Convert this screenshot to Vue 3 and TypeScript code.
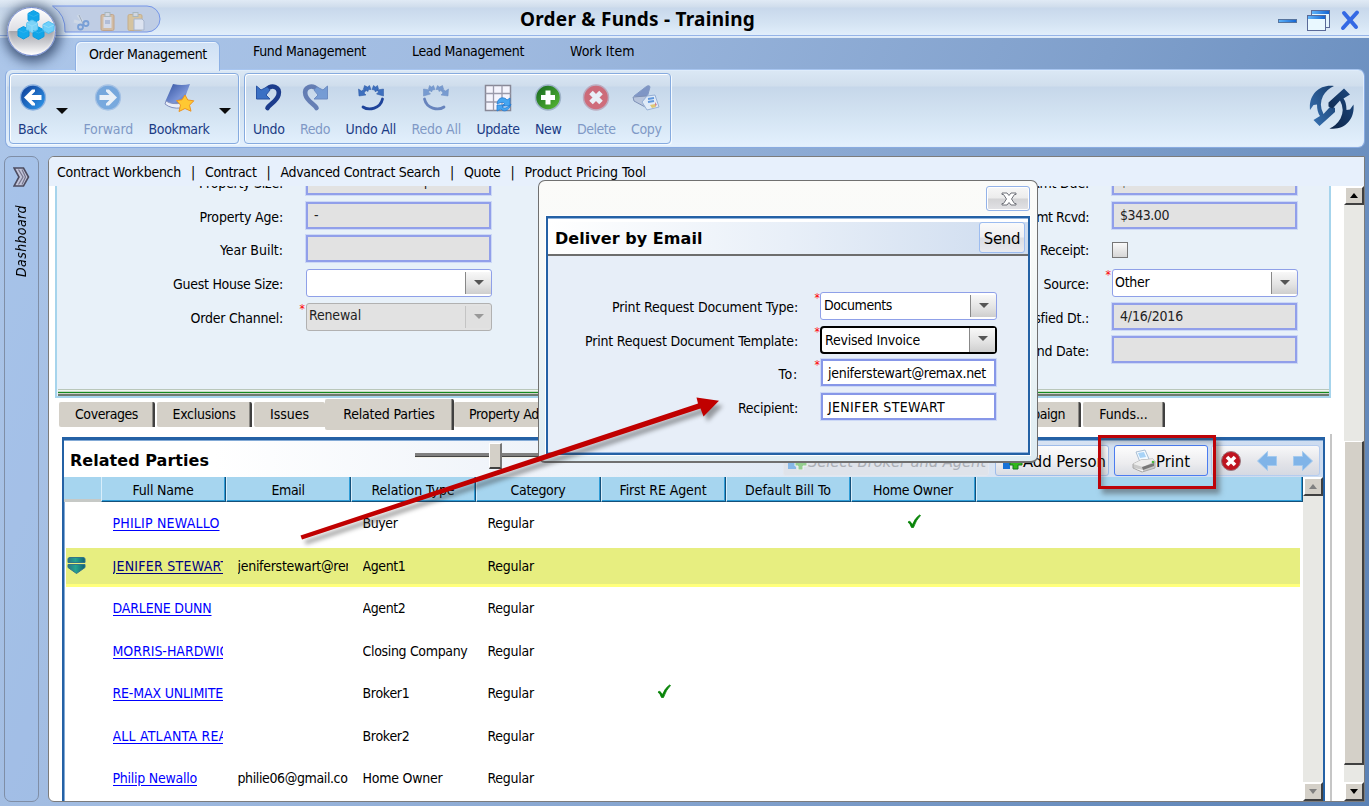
<script setup lang="ts">
import type { Directive } from 'vue'

// Tunes letter spacing so that a label takes up the given length in pixels.
const vFit: Directive<HTMLElement, number | undefined> = {
  mounted(el, { value }) {
    if (!value) return
    const range = document.createRange()
    range.selectNodeContents(el)
    const { width, height } = range.getBoundingClientRect()
    const natural = Math.max(width, height)
    const count = (el.textContent ?? '').trim().length
    if (count) el.style.letterSpacing = `${(value - natural) / count}px`
  },
}

interface Tool { id: string; label: string; w: number; off?: boolean }
const navTools: Tool[] = [
  { id: 'back', label: 'Back', w: 29 },
  { id: 'forward', label: 'Forward', w: 49.5, off: true },
  { id: 'bookmark', label: 'Bookmark', w: 61 },
]
const editTools: Tool[] = [
  { id: 'undo', label: 'Undo', w: 31.5 },
  { id: 'redo', label: 'Redo', w: 30, off: true },
  { id: 'undoall', label: 'Undo All', w: 50.5 },
  { id: 'redoall', label: 'Redo All', w: 49.5, off: true },
  { id: 'update', label: 'Update', w: 43 },
  { id: 'new', label: 'New', w: 26.5 },
  { id: 'delete', label: 'Delete', w: 38.5, off: true },
  { id: 'copy', label: 'Copy', w: 30.5, off: true },
]
const menus = [
  { label: 'Fund Management', w: 113 },
  { label: 'Lead Management', w: 112 },
  { label: 'Work Item', w: 64.5 },
]
const links = [
  { label: 'Contract Workbench', w: 124 },
  { label: 'Contract', w: 51.5 },
  { label: 'Advanced Contract Search', w: 159.5 },
  { label: 'Quote', w: 36.5 },
  { label: 'Product Pricing Tool', w: 121.5 },
]

interface Field { label: string; w: number; kind: 'text' | 'select' | 'check'; value?: string; vw?: number; req?: boolean; off?: boolean }
const leftFields: Field[] = [
  { label: 'Property Size:', w: 84, kind: 'text', value: 'Less than 5000 sq ft', vw: 126, off: true },
  { label: 'Property Age:', w: 83.5, kind: 'text', value: '-', off: true },
  { label: 'Year Built:', w: 63, kind: 'text', off: true },
  { label: 'Guest House Size:', w: 110, kind: 'select' },
  { label: 'Order Channel:', w: 92.5, kind: 'select', value: 'Renewal', vw: 52, req: true, off: true },
]
const rightFields: Field[] = [
  { label: 'Amt Due:', w: 58, kind: 'text', value: '$588.00', vw: 49, off: true },
  { label: 'Amt Rcvd:', w: 61, kind: 'text', value: '$343.00', vw: 49, off: true },
  { label: 'Receipt:', w: 49, kind: 'check' },
  { label: 'Source:', w: 45.5, kind: 'select', value: 'Other', vw: 34.5, req: true },
  { label: 'Satisfied Dt.:', w: 78, kind: 'text', value: '4/16/2016', vw: 63, off: true },
  { label: 'End Date:', w: 60, kind: 'text', off: true },
]
const mailFields = [
  { label: 'Print Request Document Type:', w: 186, kind: 'select', value: 'Documents', vw: 68, req: true },
  { label: 'Print Request Document Template:', w: 213, kind: 'select', value: 'Revised Invoice', vw: 95, req: true, focus: true },
  { label: 'To:', w: 19.5, kind: 'text', value: 'jeniferstewart@remax.net', vw: 158, req: true },
  { label: 'Recipient:', w: 60, kind: 'text', value: 'JENIFER STEWART', vw: 117 },
]

const columns = [
  { label: 'Full Name', w: 61 }, { label: 'Email', w: 33 }, { label: 'Relation Type', w: 83 },
  { label: 'Category', w: 55 }, { label: 'First RE Agent', w: 87 }, { label: 'Default Bill To', w: 86 },
  { label: 'Home Owner', w: 80 },
]
const people = [
  { name: 'PHILIP NEWALLO', nw: 107, relation: 'Buyer', rw: 35, home: true },
  { name: 'JENIFER STEWART', nw: 116, email: 'jeniferstewart@remax.net', ew: 158, relation: 'Agent1', rw: 43, selected: true },
  { name: 'DARLENE DUNN', nw: 99, relation: 'Agent2', rw: 43 },
  { name: 'MORRIS-HARDWICK', nw: 124, relation: 'Closing Company', rw: 105 },
  { name: 'RE-MAX UNLIMITED', nw: 120, relation: 'Broker1', rw: 47, agent: true },
  { name: 'ALL ATLANTA REALTY', nw: 136, relation: 'Broker2', rw: 47 },
  { name: 'Philip Newallo', nw: 84.5, email: 'philie06@gmail.co', ew: 110, relation: 'Home Owner', rw: 80 },
]
</script>

<template>
  <div class="app">
    <header class="title">
      <h1><span v-fit="235">Order &amp; Funds - Training</span></h1>
      <svg class="winbtns" width="90" height="26" viewBox="0 0 90 26">
        <defs><linearGradient id="wb"><stop offset="0" stop-color="#5fb4fa" /><stop offset="1" stop-color="#1464d2" /></linearGradient></defs>
        <rect x="3.500" y="11.500" width="18" height="3" fill="url(#wb)" stroke="#56749e" />
        <rect x="36.500" y="2.500" width="18" height="17" fill="#e4f5ff" stroke="#5a6a98" /><rect x="37" y="3" width="17" height="3" fill="url(#wb)" />
        <rect x="32.500" y="7.500" width="18" height="15" fill="#e9f8ff" stroke="#5a6a98" /><rect x="33" y="8" width="17" height="3" fill="url(#wb)" />
        <path d="M69 5 L81 19 M82 4.500 L68 20" stroke="#3469e4" stroke-width="4" stroke-linecap="round" />
      </svg>
    </header>

    <nav class="menu">
      <div class="menu-on"><span v-fit="118">Order Management</span></div>
      <span v-for="m in menus" :key="m.label" v-fit="m.w" class="menu-item">{{ m.label }}</span>
    </nav>

    <div class="quick">
      <svg width="140" height="30" viewBox="0 0 140 30">
        <path d="M.5 1 H95 A13 13 0 0 1 95 27 H13 Q14 10 .5 1Z" fill="#bfcde4" stroke="#7696e8" />
        <g opacity=".62" fill="none" transform="translate(0 1)">
          <path d="M26 9 L34 21 M22 15 L33 18" stroke="#d8e0e8" stroke-width="3" /><path d="M27 9 l5 11" stroke="#8a98a8" />
          <circle cx="28.500" cy="21" r="2.500" stroke="#4d83cf" stroke-width="1.800" /><circle cx="34" cy="17.500" r="2.500" stroke="#4d83cf" stroke-width="1.800" />
          <g stroke="#c18d58" fill="#dfb27d"><rect x="49" y="8.500" width="13" height="16" rx="1.500" /><rect x="51.500" y="11" width="8" height="11" fill="#e4e5ef" stroke="none" /><rect x="53" y="6.500" width="5" height="4" fill="#ddd" stroke="#9aa" /><path d="M53 14h5v4h-5z" fill="#a9b4d0" stroke="none" /></g>
          <g stroke="#c99b55" fill="#e4bd76"><rect x="76" y="8.500" width="14" height="16" rx="1.500" /><rect x="81" y="6.500" width="5" height="4" fill="#ddd" stroke="#9aa" /><path d="M82 13h8l2 2v9H82z" fill="#eef1f8" stroke="#9aa7be" /></g>
        </g>
      </svg>
    </div>
    <div class="orb">
      <svg width="48" height="48" viewBox="0 0 48 48">
        <g stroke-linejoin="round" stroke-width="1">
          <path d="M25.500 3.500l5.500 3v6.500l-5.500 3-5.500-3V6.500z" fill="#12a6ea" stroke="#0c9ade" />
          <path d="M15.500 19.500l5.500 3v6.500l-5.500 3-5.500-3v-6.500z" fill="#14a9ec" stroke="#0c9ade" />
          <path d="M30.500 20l5.500 3v6.500l-5.500 3-5.500-3V23z" fill="#0fa5e8" stroke="#0c9ade" />
          <path d="M24 13l5.500 3v6.500l-5.500 3-5.500-3V16z" fill="#7cd3f7" stroke="#65c6f0" />
          <path d="M40.500 14.500l5.500 3V23.500l-5.500 3-5.500-3V17.500z" fill="#6fd0fb" stroke="#52bff0" />
          <path d="M20 7l5.500 2.500L31 7M10 23l5.500 2.500L21 23M25 23.500l5.500 2.500 5.500-2.500" fill="none" stroke="#2db3ee" />
          <path d="M18.500 16.500l5.500 2.500 5.500-2.500M24 19v6M35 18l5.500 2.500L46 18" fill="none" stroke="#94dcfa" />
        </g>
      </svg>
    </div>

    <section class="ribbon">
      <div v-for="(group, gi) in [navTools, editTools]" :key="gi" class="group" :class="gi ? 'g-edit' : 'g-nav'">
        <template v-for="t in group" :key="t.id">
          <div class="tool" :class="{ off: t.off, [t.id]: true }">
            <svg width="32" height="32" viewBox="0 0 32 32">
              <template v-if="t.id === 'back' || t.id === 'forward'">
                <defs><linearGradient :id="t.id + 'g'" x2="1" y2="1"><stop offset="0" stop-color="#0e3a94" /><stop offset="1" stop-color="#2f9df0" /></linearGradient></defs>
                <circle cx="16" cy="16.500" r="12.500" :fill="t.off ? '#3c84d2' : 'url(#backg)'" stroke="#8bb0df" stroke-width="1.300" />
                <path d="M7 16.500 15 8.500 18 8.500 18 10.500 14.500 14H24.500v5H14.500l3.500 3.500v2h-3z" fill="#fff" :transform="t.off ? 'matrix(-1 0 0 1 32 0)' : undefined" />
              </template>
              <template v-else-if="t.id === 'bookmark'">
                <defs><linearGradient id="bk" x2="1" y2="1"><stop offset="0" stop-color="#3252a0" /><stop offset=".6" stop-color="#7b95d8" /><stop offset="1" stop-color="#28439a" /></linearGradient></defs>
                <path d="M10 3 Q19 5 27 3 L19 24 Q10 26 2.500 20z" fill="url(#bk)" /><path d="M3 20 Q9 24 19 22 L18 27 Q8 28 2 23z" fill="#e9edf8" stroke="#8290bd" />
                <path d="m22 14 2.800 5 6 .8-4.300 4.400 1.500 6-6-2.700-6 3 1.500-6.500-4-4.400 5.500-.8z" fill="#ffc832" stroke="#ed9321" />
              </template>
              <g v-else-if="t.id === 'undo' || t.id === 'redo'" :transform="t.id === 'redo' ? 'matrix(-1 0 0 1 32 0)' : undefined">
                <path d="M13 9 C19 2.500 27.500 6 25.500 14 C24 20 17 23 14.500 27" fill="none" stroke="#1c3c8c" stroke-width="4.600" stroke-linecap="round" />
                <path d="M3.500 5v13h13.500l-4-4 4-5-3-3-6 3z" fill="#3a70c4" stroke="#2a54a4" />
              </g>
              <g v-else-if="t.id === 'undoall' || t.id === 'redoall'" :transform="t.id === 'redoall' ? 'matrix(-1 0 0 1 32 0)' : undefined">
                <path d="M27.500 18 C25.500 27.500 14 30 8 26" fill="none" stroke="#1e439a" stroke-width="2.800" stroke-linecap="round" />
                <path d="M3.500 8 4 15 11 14 9 12 11 9.500 8.500 8.500 6.500 10zM9.500 4.500 8.500 8 13 10.500 13.500 8.500 16 8.500 14.500 4.500 12.500 6zM18.500 4.500 17 8.500 19.500 9 20.500 11 23.500 8 22.500 4.500 20.500 6zM28.500 8 22 9 23.500 11 21.500 13 28.500 15z" fill="#3d6fbe" stroke="#2b57a2" stroke-width=".5" />
              </g>
              <template v-else-if="t.id === 'update'">
                <path d="M3.500 4.500h25v25h-25z" fill="#f4f4fd" stroke="#888896" stroke-width="1.500" /><path d="M3.500 12.500h25M3.500 21h25M11.500 4.500v25M20 4.500v25" stroke="#9a9aab" stroke-width="1.300" />
                <path d="M15 23c1-8 8-7 10-4l3-2v8h-8l2.500-2.500c-2-2-3.500-1-7.500.5M29 23c-2 8-8 8-10 5l-4 2v-6h8l-3 2c3 2 5 1 9-3" fill="#45a5f1" stroke="#277bd0" stroke-width=".8" />
              </template>
              <template v-else-if="t.id === 'new'">
                <defs><linearGradient id="gn" x2="1" y2="1"><stop offset="0" stop-color="#146420" /><stop offset="1" stop-color="#5bbd35" /></linearGradient></defs>
                <circle cx="16" cy="16.500" r="12.500" fill="url(#gn)" stroke="#9fb3c9" stroke-width="1.500" />
                <path d="M13.500 9.500h5V14H23v5h-4.500v4.500h-5V19H9v-5h4.500z" fill="#fff" />
              </template>
              <template v-else-if="t.id === 'delete'">
                <circle cx="16" cy="16.500" r="12.500" fill="#d01c28" stroke="#b0899f" stroke-width="1.500" />
                <path d="m11 11.500 10 10m0-10-10 10" stroke="#fff" stroke-width="5" />
              </template>
              <template v-else>
                <path d="M4 15 17 5q3-1 3 1l-3 11z" fill="#4b66aa" stroke="#506aa8" /><path d="M3 16 16 15 23 20 17 27 4 20z" fill="#a9b4d0" stroke="#43588e" />
                <path d="m17 15 8-1 4 12-12 3-5-8z" fill="#eef5ff" stroke="#6f8fc4" /><path d="m18 18 6-1M18 21l6-1" stroke="#1466d0" stroke-width="2" /><path d="m20 24 5-1 1 3-4 1z" fill="#eab81c" /><path d="m25 21 2 3-2 1z" fill="#d93f48" />
              </template>
            </svg>
            <span v-fit="t.w">{{ t.label }}</span>
          </div>
          <i v-if="t.id === 'back' || t.id === 'bookmark'" class="drop" />
        </template>
      </div>
      <svg class="brand" width="46" height="46" viewBox="0 0 46 46">
        <defs>
          <linearGradient id="bra" x1="1" x2="0" y2="1"><stop offset="0" stop-color="#173b6a" /><stop offset="1" stop-color="#3a76b8" /></linearGradient>
          <linearGradient id="brb" x1="1" x2="0" y2="1"><stop offset="0" stop-color="#0d2344" /><stop offset="1" stop-color="#1d4a82" /></linearGradient>
        </defs>
        <path d="M25 1 C10 -1 -.5 10 1 25 L4.500 20 L8 19.500 Q8 27 11 31 L4.500 35 L10.500 41 L26 27 L26 23 L22 21 L20 23 L14.500 29 Q9.500 20 14 11 Q18 4 25 1Z" fill="url(#bra)" />
        <path d="M25 1 C10 -1 -.5 10 1 25 L4.500 20 L8 19.500 Q8 27 11 31 L4.500 35 L10.500 41 L26 27 L26 23 L22 21 L20 23 L14.500 29 Q9.500 20 14 11 Q18 4 25 1Z" fill="url(#brb)" transform="rotate(180 22.750 22.250)" />
      </svg>
    </section>

    <div class="body">
      <aside class="side">
        <svg width="18" height="20" viewBox="0 0 18 20"><path d="M1 1h9.500l5 9-5 9H1l5-9z" fill="#c3c5da" stroke="#4c4c60" stroke-width="1.600" /><path d="M5.500 2.500l4.500 7.500-4.500 7.500M9 2.500l3.500 7.500L9 17.500" fill="none" stroke="#75768e" stroke-width="1.200" /></svg>
        <span v-fit="72">Dashboard</span>
      </aside>

      <main class="main">
        <nav class="links">
          <template v-for="(l, i) in links" :key="l.label">
            <i v-if="i">|</i><span v-fit="l.w">{{ l.label }}</span>
          </template>
        </nav>

        <div class="work">
          <div class="content">
            <section class="details">
              <div v-for="(side, si) in [leftFields, rightFields]" :key="si" class="fields">
                <div v-for="f in side" :key="f.label" class="row">
                  <label><span v-fit="f.w">{{ f.label }}</span></label>
                  <b class="star">{{ f.req ? '*' : '' }}</b>
                  <div v-if="f.kind === 'check'" class="check" />
                  <div v-else class="box" :class="[f.kind, { off: f.off }]">
                    <span v-fit="f.vw">{{ f.value }}</span>
                    <em v-if="f.kind === 'select'" />
                  </div>
                </div>
              </div>
            </section>

            <div class="tabs">
              <div class="tab t1"><span v-fit="63">Coverages</span></div>
              <div class="tab t2"><span v-fit="63">Exclusions</span></div>
              <div class="tab t3"><span v-fit="39">Issues</span></div>
              <div class="tab on"><span v-fit="91.5">Related Parties</span></div>
              <div class="tab t5"><span v-fit="102">Property Address</span><span v-fit="60">Campaign</span></div>
              <div class="tab t6"><span v-fit="48.5">Funds...</span></div>
            </div>

            <div class="lower">
              <section class="grid-panel">
                <div class="grid-head">
                  <h2><span v-fit="139">Related Parties</span></h2>
                  <div class="slider"><i /></div>
                  <div class="cmd faded"><svg width="22" height="18" viewBox="0 0 22 18"><path d="M2 3h8v14H2z" fill="#3f95e8" /><path d="M12 5h5v4h4v5h-4v4h-5v-4H9V9h3z" fill="#58bd45" stroke="#fff" /></svg><span v-fit="178">Select Broker and Agent</span></div>
                  <div class="cmd add"><svg width="22" height="18" viewBox="0 0 22 18"><path d="M2 3h7v14H2z" fill="#1772d8" /><path d="M12 5h5v4h4v4h-4v4h-5v-4H9V9h3z" fill="#32b81a" stroke="#14781a" /></svg><span v-fit="83">Add Person</span></div>
                  <div class="cmd print">
                    <svg width="24" height="24" viewBox="0 0 24 24"><path d="M4 3 13 1l4 9-9 3z" fill="#f4faff" stroke="#a9bed4" /><path d="m6 4 6-1 2 5-6 1z" fill="#a8d3f7" /><path d="m1 15 8-4 12-1 2 2v7l-13 4-9-4z" fill="#cacaca" stroke="#a8a8a8" /><path d="m1 15 8-4 12-1 2 2-12 6z" fill="#ededed" /><path d="m10 18 12-4v3l-11 4z" fill="#777" /><path d="m2 19 9 2v1.500z" fill="#f8f8f8" /><circle cx="21" cy="13" r="1.300" fill="#4ab83a" /></svg>
                    <span v-fit="34">Print</span>
                  </div>
                  <div class="mini">
                    <svg width="110" height="28" viewBox="0 0 110 28">
                      <circle cx="19" cy="15" r="9.500" fill="#c01420" stroke="#9b7880" /><path d="m15 11 8 8m0-8-8 8" stroke="#fff" stroke-width="3.600" />
                      <path d="M45.500 15 55.500 5.500v5h9v9h-9v5z" fill="#80b4e8" stroke="#a3c9ee" /><path d="M100.500 15 90.500 5.500v5h-9v9h9v5z" fill="#80b4e8" stroke="#a3c9ee" />
                    </svg>
                  </div>
                </div>
                <div class="table-wrap">
                  <div class="table">
                    <div class="tr th">
                      <div class="c0" />
                      <div v-for="c in columns" :key="c.label" class="c"><span v-fit="c.w">{{ c.label }}</span></div>
                      <div class="rest" />
                    </div>
                    <div v-for="p in people" :key="p.name" class="tr" :class="{ sel: p.selected }">
                      <div class="c0">
                        <svg v-if="p.selected" width="20" height="18" viewBox="0 0 20 18"><defs><linearGradient id="mk"><stop offset="0" stop-color="#2d7481" /><stop offset=".45" stop-color="#25a490" /><stop offset="1" stop-color="#126074" /></linearGradient></defs><path d="M1 2q0-1.500 2-1.500h13q2 0 2 1.500v3.500H1zM1 7.500h17v3l-8.500 6-8.500-6z" fill="url(#mk)" stroke="#317489" /></svg>
                      </div>
                      <div class="c"><a v-fit="p.nw">{{ p.name }}</a></div>
                      <div class="c"><span v-fit="p.ew">{{ p.email }}</span></div>
                      <div class="c"><span v-fit="p.rw">{{ p.relation }}</span></div>
                      <div class="c"><span v-fit="46.500">Regular</span></div>
                      <div v-for="(on, k) in [p.agent, false, p.home]" :key="k" class="c mark">
                        <svg v-if="on" width="15" height="15" viewBox="0 0 15 15"><path d="M1 8 Q2.500 6.500 4 8.500 L5.500 10.500 Q8 4 12.500 1 L13.500 1.500 Q9 6 6.500 13.500 H4.500Q3.500 10 1 8z" fill="#078407" stroke="#078407" stroke-width=".8" /></svg>
                      </div>
                    </div>
                  </div>
                  <div class="bar inner"><i class="up" /><i class="down" /></div>
                </div>
              </section>
            </div>
          </div>
          <div class="bar outer"><i class="up" /><div class="thumb" /><i class="down" /></div>
        </div>
      </main>
    </div>

    <div class="dialog">
      <div class="dlg-top"><button><svg width="16" height="14" viewBox="0 0 16 14"><path d="M1 1h5L8 3.500 10 1h5v1.500h-1.500L10.500 7l3 4.500H15V13h-5L8 10.500 6 13H1v-1.500h1.500l3-4.500-3-4.500H1z" fill="#fff" stroke="#6e7078" /></svg></button></div>
      <div class="dlg-body">
        <div class="dlg-head"><h2><span v-fit="147.5">Deliver by Email</span></h2><button><span v-fit="36.500">Send</span></button></div>
        <div class="dlg-form">
          <div v-for="f in mailFields" :key="f.label" class="row">
            <label><span v-fit="f.w">{{ f.label }}</span></label>
            <b class="star">{{ f.req ? '*' : '' }}</b>
            <div class="box" :class="[f.kind, { focus: f.focus }]"><span v-fit="f.vw">{{ f.value }}</span><em v-if="f.kind === 'select'" /></div>
          </div>
        </div>
      </div>
    </div>

    <div class="callout" />
    <svg class="arrow" width="440" height="170" viewBox="0 0 440 170">
      <path d="M10.500 145.500 408 13.500 406.500 7.500 429 10.700 413.500 26.500 410.500 18.500 12 149.500z" fill="#c00000" />
    </svg>
  </div>
</template>

<style>
html, body { margin: 0; overflow: hidden; }
</style>

<style scoped>
* { box-sizing: border-box; }
.app { position: relative; width: 1369px; height: 806px; overflow: hidden; display: flex; flex-direction: column; font: 14px "DejaVu Sans Condensed", "Noto Sans", sans-serif; color: #000; white-space: nowrap; background: linear-gradient(115deg, #adc7ea 0%, #9fbae0 30%, #7f9fcb 65%, #688dbe 85%, #5b82b5 100%); }
h1, h2 { margin: 0; }
i, em { font-style: normal; }
button { padding: 0; font: inherit; }

.title { height: 38px; flex: none; display: flex; background: linear-gradient(#e0eaf5 0, #d0ddec 7px, #c8d8eb 8px, #d5e4f3 24px, #e1eefb 35px, #96b4e8 35px, #96b4e8 36px, #e3effc 36px, #dce8f5 38px); }
.title h1 { margin-left: 520px; width: 755px; font: bold 19px/38px "Noto Sans", sans-serif; }
.winbtns { margin-top: 8px; fill: none; }

.menu { height: 31px; flex: none; display: flex; }
.menu-on { margin: 3px 0 -3px 75px; width: 145px; height: 30px; border: 1px solid #8db0e4; border-bottom: 0; border-radius: 6px 6px 0 0; background: linear-gradient(#cfe0f4, #dfebf9); box-shadow: inset 1px 1px #eef6ff; text-align: center; line-height: 25px; position: relative; padding-left: 1px; }
.menu-item { line-height: 27px; margin-left: 46px; flex: none; }
.menu-item:nth-child(2) { margin-left: 33px; }

.quick { position: absolute; left: 52px; top: 5px; }
.orb { position: absolute; left: 7px; top: 7px; width: 49px; height: 49px; border-radius: 50%; border: 1px solid #7388cc; background: linear-gradient(#fff 0, #dedee4 48%, #a5a6ad 50%, #c9cacf 72%, #fff 100%); box-shadow: 1px 2px 12px 4px rgba(35, 55, 90, .75), inset 0 0 3px #fff; }
.orb svg { margin: -1px 0 0 0; display: block; }

.ribbon { height: 79px; flex: none; margin: 0 4px 0 5px; border: 1px solid #89abe0; border-top-color: #a7c5f0; border-radius: 7px; background: linear-gradient(#dbe8f5 0, #d0deed 16px, #c6d7ea 17px, #d3e3f2 45px, #e4f1fe 78px); display: flex; padding: 3px 9px 4px 3px; box-shadow: inset 0 0 0 1px #dfecfa; }
.group { border: 1px solid #86abdf; border-radius: 4px; box-shadow: inset 1px 1px #fff, 1px 1px #f4faff; display: flex; height: 71px; background: linear-gradient(#d9e6f4 0, #cfddec 12px, #c6d7ea 13px, #d3e3f2 41px, #e2f0fd 70px); }
.g-nav { width: 230px; padding-left: 8px; margin-right: 5px; }
.g-edit { width: 427px; padding-left: 8px; gap: 15.500px; }
.tool { display: flex; flex-direction: column; align-items: center; color: #1b3b85; padding-top: 7px; }
.tool svg { margin: 0 -16px; height: 32px; flex: none; }
.tool span { line-height: 18px; margin-top: 7px; }
.tool.off { color: #8099c6; }
.tool.off svg { opacity: .58; }
.drop { border: 6px solid transparent; border-top: 6px solid #0b0b0b; height: 0; width: 0; margin: 34px 15.500px 0 9px; }
.tool.forward { margin-right: 15.500px; }
.brand { margin: 12px 0 0 auto; }

.body { flex: 1; min-height: 0; display: flex; gap: 9px; padding: 8px 4px 4px 4px; }
.side { width: 35px; flex: none; border: 1px solid #7f8ea6; border-radius: 7px; padding: 10px 0 0 8px; background: rgba(160, 192, 234, .35); }
.side svg { display: block; }
.side span { display: block; margin: 15px 0 0 -1px; writing-mode: vertical-rl; transform: rotate(180deg); font-style: italic; line-height: 18px; height: 76px; padding-top: 1px; }
.main { width: 1317px; flex: none; border: 1px solid #7c7c7c; border-radius: 6px 0 0 6px; background: #fff; display: flex; flex-direction: column; overflow: hidden; }
.links { height: 29px; flex: none; background: #e7f0fc; display: flex; line-height: 30px; padding-left: 8px; }
.links i { width: 24px; text-align: center; }
.work { flex: 1; min-height: 0; display: flex; }
.content { width: 1295px; flex: none; display: flex; flex-direction: column; }

.details { position: relative; flex: none; height: 212px; margin-left: 6px; width: 1276px; border: 2px solid #a6d4ec; border-top: 0; background: #e8f1f9; overflow: hidden; display: flex; }
.details::after { content: ""; position: absolute; left: 1px; right: 0; bottom: 0; height: 7px; background: linear-gradient(#b9c7ba 0 1px, #f0f4f0 1px 2px, #c6dcc6 2px 3px, #178a20 3px 4px, #cfd2c8 4px 5px, #6f7a70 5px 7px); }
.fields { width: 435px; margin-top: -19px; }
.fields + .fields { margin-left: 371px; }
.row { display: grid; grid-template-columns: 226px 23px 187px; height: 33.7px; align-items: start; }
.row label { text-align: right; line-height: 32px; padding-right: 0; }
.star { color: #f00; font: 400 12px/14px "DejaVu Sans Condensed", sans-serif; text-align: right; padding-right: 1px; }
.box { background: #fff; color: #000; display: flex; }
.box.text { border: 2px solid #919fea; outline: 1px solid #ccd8f6; outline-offset: 0; height: 27px; margin: 1px 0 0 0; width: 185px; line-height: 23px; padding-left: 6px; }
.fields .box.off { background: #e2e2e2; color: #222; }
.box.select { border: 1px solid #8fa0e8; border-radius: 3px; height: 28px; margin: 1px 0; width: 186px; padding-left: 2px; line-height: 24px; }
.box.select.off { border-color: #b1b1b1; line-height: 23px; }
.box em { margin: 2px 0 2px auto; width: 26px; border-left: 1px solid #888; background: linear-gradient(#f8f8f8, #e2e2e2 60%, #cecece); display: flex; justify-content: center; padding-top: 8px; }
.box em::after { content: ""; width: 0; height: 0; border: 5px solid transparent; border-top-color: #555; border-bottom: 0; }
.box.off em { border-color: #c4c4c4; background: #e0e0e0; }
.box.off em::after { border-top-color: #999; }
.check { width: 16px; height: 16px; margin: 8px 0 0 0; border: 1px solid #777; background: linear-gradient(#fafafa, #d6d6d6); }

.tabs { flex: none; display: flex; height: 36px; margin-left: 10px; padding-top: 4px; }
.tab { height: 25px; background: #d4d0c8; border-radius: 2px 2px 0 2px; line-height: 24px; display: flex; justify-content: center; flex: none; border-right: 2px solid #404040; box-shadow: inset -1px 0 #8b8984; }
.t1 { width: 96px; margin-right: 2px; padding-left: 1px; }
.t2 { width: 95px; margin-right: 2px; padding-left: 1px; }
.t3 { width: 71px; border: 0; box-shadow: none; }
.tab.on { height: 31px; margin-top: -3px; width: 129px; line-height: 30px; padding-left: 1px; }
.t5 { width: 627px; justify-content: space-between; padding: 0 14px 0 15px; margin-right: 2px; }
.t6 { width: 82px; padding-left: 1px; }

.lower { flex: 1; min-height: 0; margin-left: 13px; width: 1270px; padding-top: 3px; border-right: 2px solid #c6c6c6; }
.grid-panel { width: 1263px; height: 100%; border: solid #2461a5; border-width: 3px 2px 0; box-shadow: inset 1px 1px #83aad6; padding: 1px 0 0; display: flex; flex-direction: column; }
.grid-head { height: 36px; flex: none; display: flex; padding-top: 4px; background: linear-gradient(90deg, #fff 0, #fff 12%, #dfe8f4 60%, #cddcf0); }
.grid-head h2 { width: 351px; padding-left: 6px; font: bold 16px/31px "DejaVu Sans", sans-serif; }
.slider { width: 130px; height: 4px; margin-top: 8px; background: #808080; border-bottom: 1px solid #444; box-shadow: 0 1px #f4f2e8; }
.slider i { display: block; width: 13px; height: 26px; margin: -10px 0 0 74px; background: #d4d0c8; border: 1px solid #fff; border-right: 2px solid #777; border-bottom: 2px solid #404040; position: relative; }
.cmd { height: 31px; border: 1px solid #9ebcea; border-radius: 3px; background: linear-gradient(#fdfdfd, #ececef 60%, #d9dce3); display: flex; align-items: center; font-size: 16.500px; flex: none; padding-top: 1px; }
.cmd.faded { margin-left: 238px; width: 206px; color: #abafb6; font-style: italic; border-color: #e3e7ee; background: #dfe3ea; padding-left: 2px; }
.cmd.faded svg { opacity: .55; }
.cmd.add { margin-left: 6px; width: 114px; padding-left: 5px; }
.cmd.print { margin-left: 5px; width: 94px; border-color: #4b7cf0; padding-left: 17px; }
.mini { height: 31px; margin-left: 3px; width: 109px; border: 1px solid #b5ccef; border-radius: 3px; background: linear-gradient(#f8f8f9, #e2e3e8 60%, #d5d9e2); }

.table-wrap { flex: 1; min-height: 0; display: flex; }
.table { width: 1239px; overflow: hidden; }
.tr { display: flex; height: 42.5px; align-items: stretch; line-height: 43px; }
.tr .c0 { width: 37px; flex: none; }
.tr .c { width: 125px; flex: none; padding-left: 11.500px; }
.tr .c a, .tr .c span { display: block; width: 110.500px; overflow: hidden; height: 42px; }
.tr .c a { color: #00f; text-decoration: underline; text-underline-offset: 2px; }
.tr.th .c span { display: inline; }
.tr.th { height: 25px; line-height: 24px; }
.tr.th > div { background: #a6d5ef; border-right: 1px solid #14507a; border-bottom: 1px solid #14507a; box-shadow: inset -1px -1px #2f9dd8; }
.tr.th .c { text-align: center; padding: 1px 1px 0 0; border-left: 1px solid #d8eefb; }
.tr.th .c0 { border: 0; border-bottom: 3px solid #c6c9c6; box-shadow: none; width: 37px; }
.tr.th .rest { flex: 1; border-left: 1px solid #d8eefb; border-right-width: 1px; }
.tr.sel { background: linear-gradient(transparent 2.5px, #e7ee80 2.5px, #e7ee80 39px, #ffff7c 39px, #ffff7c 43px); margin: 0 3px 0 2px; }
.sel .c0 svg { margin: 12px 0 0 1px; }
.tr.sel .c0 { width: 35px; }
.tr.sel .c a { color: #000080; }
.tr .mark { padding: 12px 0 0 2px; display: flex; justify-content: center; }

.bar { background: #e8e8e4; display: flex; flex-direction: column; flex: none; width: 20px; }
.bar i { width: 20px; height: 19px; flex: none; background: #d4d0c8; border: 2px solid #fff; border-right-color: #404040; border-bottom-color: #404040; display: flex; align-items: center; justify-content: center; }
.bar i::after { content: ""; width: 0; height: 0; border: 4px solid transparent; }
.bar .up::after { border-bottom: 5px solid #000; border-top: 0; }
.bar .down { margin-top: auto; }
.bar .down::after { border-top: 5px solid #000; border-bottom: 0; }
.bar.inner .up::after { border-bottom-color: #808080; }
.bar.inner .down::after { border-top-color: #808080; }
.thumb { margin-top: 236px; height: 324px; background: #d4d0c8; border: 1px solid #fff; border-right: 2px solid #404040; border-bottom: 2px solid #404040; }

.dialog { position: absolute; left: 538px; top: 180px; width: 500px; height: 283px; border: 1px solid #707070; border-bottom-width: 2px; border-radius: 7px; background: linear-gradient(#fbfbf9, #f8faf8 25%, #deecf2); padding: 5px 7px 0; }
.dlg-top { height: 30px; display: flex; justify-content: flex-end; }
.dlg-top button { width: 44px; height: 25px; border: 1px solid #93b2e8; border-radius: 3px; background: linear-gradient(#f7f7f7, #ececec 48%, #d3d3d5 52%, #e2e2e6); display: flex; align-items: center; justify-content: center; box-shadow: inset 0 0 0 1px #fff; padding-left: 1px; }
.dlg-body { height: 239px; border: 2px solid #2461a5; outline: 1px solid #fff; background: #e7eef8; box-shadow: inset 0 1px #8fb2dc, inset 0 -1px #8fb2dc; padding-top: 1px; }
.dlg-head { height: 37px; display: flex; justify-content: space-between; border-top: 3px solid #fff; border-bottom: 2px solid #6d6d6d; background: linear-gradient(90deg, #fff 0, #e8eff8 50%, #cedcef); }
.dlg-head h2 { padding-left: 7px; font: bold 16px/33px "DejaVu Sans", sans-serif; }
.dlg-head button { width: 46px; height: 31px; margin: 0 3px 0 0; border: 1px solid #9cbcf0; border-radius: 3px; background: linear-gradient(#fafafa, #efeff2 48%, #dcdde2 52%, #e9eaef); font-size: 16.500px; padding-top: 2px; }
.dlg-form { padding: 35px 0 0 24px; }
.dlg-form .row { grid-template-columns: 226px 22px 178px; }
.dlg-form .star { padding-right: 0; }
.dlg-form .box.select { width: 177px; padding-left: 3px; line-height: 25px; }
.dlg-form .box.text { width: 175px; margin-left: 1px; border-color: #8797e8; padding-left: 5px; line-height: 25px; }
.dlg-form .box.focus { border: 2px solid #000; border-radius: 4px; }
.dlg-form .box.focus em { margin: 0 0 0 auto; }

.callout { position: absolute; left: 1098px; top: 435px; width: 118px; height: 54px; border: 3px solid #bd0308; box-shadow: 4px 5px 5px rgba(70, 70, 70, .5), inset 3px 4px 5px rgba(70, 70, 70, .35); }
.arrow { position: absolute; left: 290px; top: 390px; filter: drop-shadow(4px 5px 2px rgba(50, 50, 50, .45)); }
</style>
